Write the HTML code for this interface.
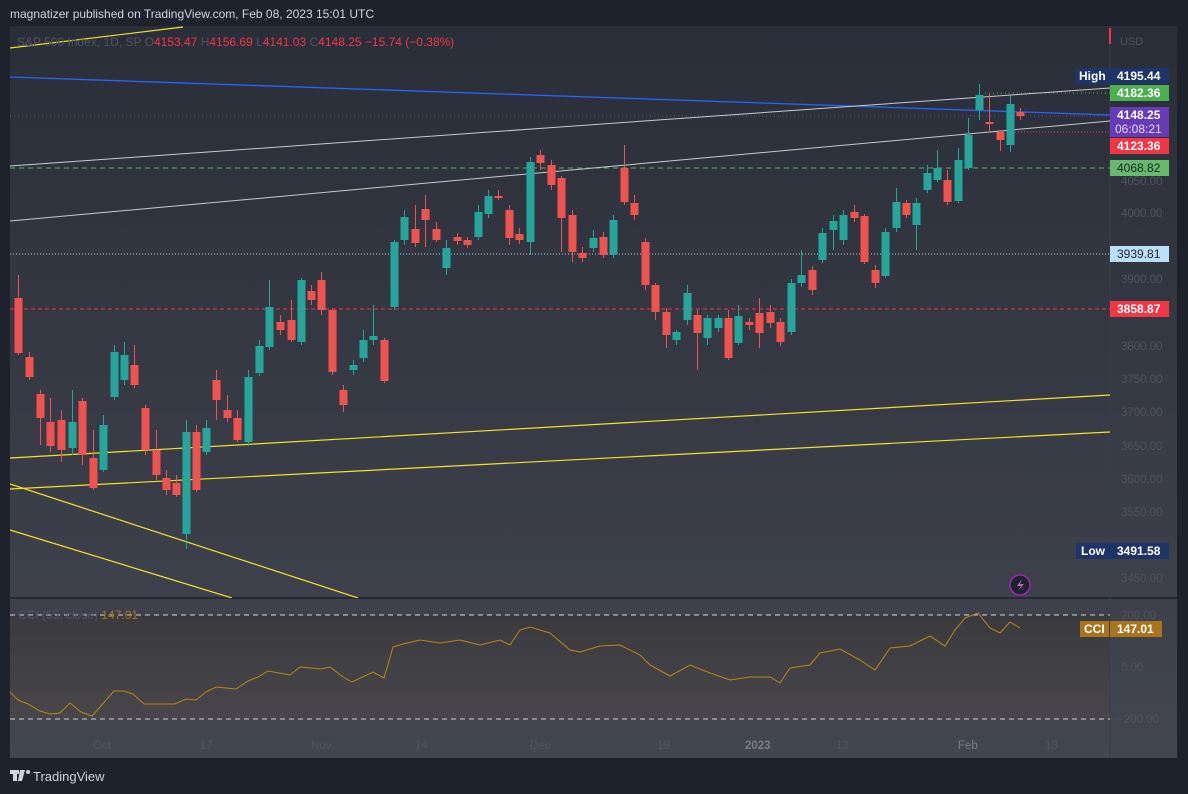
<!DOCTYPE html>
<html><head><meta charset="utf-8"><style>
*{margin:0;padding:0}
body{width:1188px;height:794px;background:#1e222d;overflow:hidden;font-family:"Liberation Sans",sans-serif;position:relative}
svg{position:absolute;left:0;top:0}
</style></head><body>
<svg id="s" width="1188" height="794" viewBox="0 0 1188 794" font-family="Liberation Sans, sans-serif">
<defs>
<linearGradient id="g" x1="0" y1="0" x2="0" y2="1"><stop offset="0" stop-color="#2a2e39"/><stop offset="1" stop-color="#434651"/></linearGradient>
<linearGradient id="c" x1="0" y1="0" x2="0" y2="1"><stop offset="0" stop-color="#3a3a3e"/><stop offset="1" stop-color="#48464a"/></linearGradient>
<clipPath id="cp"><rect x="10" y="26" width="1100" height="572"/></clipPath>
</defs>
<rect x="10" y="26" width="1167" height="732" fill="url(#g)"/>
<rect x="10" y="597" width="1167" height="2" fill="#262a33"/>
<rect x="10" y="615" width="1100" height="104" fill="url(#c)"/>
<line x1="1110" y1="26" x2="1110" y2="758" stroke="#3a3e48" stroke-width="1"/>
<text x="10" y="18" fill="#d1d4dc" font-size="12">magnatizer published on TradingView.com, Feb 08, 2023 15:01 UTC</text>
<g clip-path="url(#cp)" id="chart">
<line x1="10" y1="116" x2="1110" y2="116" stroke="#7e57c2" stroke-dasharray="1 3" opacity=".7"/>
<line x1="10" y1="254" x2="1110" y2="254" stroke="#b2c7e0" stroke-dasharray="1 2"/>
<line x1="10" y1="309" x2="1110" y2="309" stroke="#f23645" stroke-dasharray="4 3"/>
<line x1="10" y1="168" x2="1110" y2="168" stroke="#4caf50" stroke-dasharray="5 4"/>
<line x1="985" y1="93" x2="1110" y2="93" stroke="#4caf50" stroke-dasharray="1 3"/>
<line x1="985" y1="132" x2="1110" y2="132" stroke="#f23645" stroke-dasharray="1 2"/>
<line x1="10" y1="77" x2="1110" y2="115" stroke="#2962ff" stroke-width="1.3"/>
<line x1="10" y1="166" x2="1110" y2="88" stroke="#c8cad0" stroke-width="1"/>
<line x1="10" y1="221" x2="1110" y2="121" stroke="#c8cad0" stroke-width="1"/>
<line x1="10" y1="458" x2="1110" y2="395" stroke="#f5e12a" stroke-width="1.2"/>
<line x1="10" y1="489" x2="1110" y2="432" stroke="#f5e12a" stroke-width="1.2"/>
<line x1="10" y1="484" x2="358" y2="598" stroke="#f5e12a" stroke-width="1.2"/>
<line x1="10" y1="530" x2="232" y2="598" stroke="#f5e12a" stroke-width="1.2"/>
<line x1="10" y1="48" x2="183" y2="27" stroke="#f5e12a" stroke-width="1.2"/>
<g id="cdl"></g>
</g>
<text x="17" y="46" font-size="12" fill="#50535e">S&amp;P 500 Index, 1D, SP  O<tspan fill="#f23645">4153.47</tspan>  H<tspan fill="#f23645">4156.69</tspan>  L<tspan fill="#f23645">4141.03</tspan>  C<tspan fill="#f23645">4148.25</tspan>  <tspan fill="#f23645">−15.74 (−0.38%)</tspan></text>
<rect x="1109" y="28" width="2" height="16" fill="#f23645"/>
<text x="1120" y="45" font-size="11" fill="#50535e">USD</text>
<g font-size="11.5" fill="#50535e">
<text x="1121" y="185">4050.00</text><text x="1121" y="217">4000.00</text><text x="1121" y="283">3900.00</text>
<text x="1121" y="350">3800.00</text><text x="1121" y="383">3750.00</text><text x="1121" y="416">3700.00</text>
<text x="1121" y="450">3650.00</text><text x="1121" y="483">3600.00</text><text x="1121" y="516">3550.00</text>
<text x="1121" y="582">3450.00</text>
<text x="1121" y="619">200.00</text><text x="1121" y="671">0.00</text><text x="1117" y="723">−200.00</text>
<text x="93" y="749">Oct</text><text x="200" y="749">17</text><text x="311" y="749">Nov</text><text x="415" y="749">14</text>
<text x="530" y="749">Dec</text><text x="657" y="749">19</text><text x="1045" y="749">13</text><text x="836" y="749">13</text>
<text x="958" y="749" fill="#787b86">Feb</text><text x="745" y="749" font-weight="bold" fill="#787b86">2023</text>
</g>
<g font-size="12" font-weight="bold">
<rect x="1075" y="68" width="35" height="16" fill="#1e3466"/><text x="1079" y="80" fill="#fff">High</text>
<rect x="1110" y="68" width="59" height="16" fill="#1e3466"/><text x="1117" y="80" fill="#fff">4195.44</text>
<rect x="1110" y="85" width="59" height="16" fill="#4caf50"/><text x="1117" y="97" fill="#fff">4182.36</text>
<rect x="1110" y="107" width="59" height="30" fill="#673ab7"/><text x="1117" y="119" fill="#fff">4148.25</text><text x="1115" y="133" fill="#e0d8f0" font-weight="normal">06:08:21</text>
<rect x="1110" y="138" width="59" height="16" fill="#f23645"/><text x="1117" y="150" fill="#fff">4123.36</text>
<rect x="1110" y="160" width="59" height="16" fill="#66bb6a"/><text x="1117" y="172" fill="#1e222d" font-weight="normal">4068.82</text>
<rect x="1110" y="246" width="59" height="16" fill="#bbdefb"/><text x="1117" y="258" fill="#1e222d" font-weight="normal">3939.81</text>
<rect x="1110" y="301" width="59" height="16" fill="#f23645"/><text x="1117" y="313" fill="#fff">3858.87</text>
<rect x="1076" y="543" width="34" height="16" fill="#1e3466"/><text x="1081" y="555" fill="#fff">Low</text>
<rect x="1110" y="543" width="59" height="16" fill="#1e3466"/><text x="1117" y="555" fill="#fff">3491.58</text>
<rect x="1080" y="621" width="29" height="16" fill="#a8751c"/><text x="1084" y="633" fill="#fff">CCI</text>
<rect x="1110" y="621" width="52" height="16" fill="#a8751c"/><text x="1117" y="633" fill="#fff">147.01</text>
</g>
<circle cx="1020" cy="585" r="10" fill="#1e222d" stroke="#9c27b0" stroke-width="1.5"/>
<path d="M1022 579 L1017 586 L1021 586 L1018 591 L1024 584 L1020 584 Z" fill="#ba68c8"/>
<line x1="10" y1="615" x2="1110" y2="615" stroke="#d1d4dc" stroke-dasharray="5 4"/>
<line x1="10" y1="719" x2="1110" y2="719" stroke="#d1d4dc" stroke-dasharray="5 4"/>
<text x="18" y="619" font-size="12" fill="#50535e">CCI (55, close)  <tspan fill="#a8751c">147.01</tspan></text>
<polyline fill="none" stroke="#b8861a" stroke-width="1" points="10,692 18,700 28,704 40,711 50,714 60,713 70,703 81,712 92,716 114,691 124,691 133,694 144,704 175,704 186,699 196,700 206,692 216,687 236,689 248,681 258,677 268,671 290,675 300,667 321,669 330,667 343,677 352,682 373,672 384,678 393,647 403,644 420,640 440,643 460,640 480,645 500,640 510,645 520,630 530,627 550,633 570,650 580,652 600,646 620,645 640,655 650,665 670,676 690,665 710,673 730,680 750,677 770,677 780,683 790,668 810,665 820,653 840,649 860,660 875,670 890,648 910,646 930,636 945,646 955,630 965,618 978,613 990,628 1000,633 1010,622 1020,628"/>
<g fill="#d1d4dc"><rect x="10" y="770" width="9" height="4"/><rect x="13" y="770" width="4" height="11"/><path d="M20 770h5l-3 11h-4z"/><circle cx="28" cy="772" r="2"/></g>
<text x="33" y="781" font-size="13" fill="#d1d4dc">TradingView</text>
</svg>
<script>
var d=[[18,'R',298,353,275,355],[29,'R',357,377,352,380],[40,'R',394,418,390,445],[50,'R',422,446,398,452],[61,'R',420,450,410,462],[72,'G',422,448,390,455],[82,'R',401,455,398,465],[93,'R',458,488,430,490],[103,'G',425,470,415,472],[114,'G',352,397,345,400],[124,'G',355,380,342,385],[134,'R',365,385,345,388],[145,'R',408,450,405,455],[156,'R',450,475,430,480],[166,'R',478,490,470,495],[176,'R',483,495,475,497],[186,'G',432,534,420,549],[196,'R',432,490,425,492],[206,'G',428,452,420,455],[216,'R',380,400,370,420],[227,'R',410,418,395,422],[237,'R',418,440,410,442],[248,'G',377,442,370,446],[259,'G',346,373,340,376],[269,'G',307,347,280,350],[280,'R',322,330,315,335],[291,'R',320,340,300,342],[301,'G',280,342,278,345],[311,'R',291,300,285,305],[321,'R',280,310,272,315],[332,'R',310,372,308,375],[343,'R',390,405,385,412],[353,'G',365,370,360,375],[363,'G',340,358,330,362],[373,'G',336,340,305,345],[384,'R',340,381,338,383],[394,'G',242,307,240,310],[404,'G',217,240,210,245],[415,'R',229,243,205,247],[425,'R',209,220,195,247],[436,'R',229,240,222,242],[446,'G',248,268,240,275],[457,'R',237,241,233,245],[467,'R',240,245,237,248],[478,'G',212,237,205,240],[488,'G',196,214,190,218],[498,'R',196,198,190,200],[509,'R',210,238,205,245],[519,'R',234,240,228,244],[530,'G',162,242,157,255],[540,'R',155,163,150,170],[551,'R',165,185,160,190],[561,'R',178,218,176,252],[572,'R',215,252,210,262],[582,'R',253,258,247,262],[593,'G',238,248,230,252],[603,'R',237,255,232,258],[613,'G',220,255,215,258],[624,'R',168,202,145,205],[634,'R',203,215,195,220],[645,'R',242,285,238,290],[655,'R',285,312,283,320],[666,'R',312,335,308,348],[676,'G',332,340,330,345],[687,'G',293,320,285,325],[697,'R',315,333,310,370],[707,'G',318,338,315,345],[718,'G',318,328,315,332],[728,'R',318,358,310,360],[738,'G',316,343,305,345],[749,'R',322,325,318,330],[759,'R',313,333,298,348],[770,'R',312,323,305,328],[780,'R',322,342,318,346],[791,'G',283,332,279,335],[801,'G',275,283,250,287],[812,'R',270,290,266,295],[822,'G',233,260,228,263],[833,'G',221,230,215,250],[843,'G',215,240,210,245],[854,'R',212,218,205,222],[864,'R',216,262,214,264],[875,'R',270,283,265,288],[885,'G',232,276,228,278],[896,'G',202,228,188,232],[906,'R',203,215,200,218],[916,'G',203,225,198,250],[927,'G',173,190,165,193],[937,'G',168,180,150,182],[947,'R',180,202,170,205],[958,'G',160,201,148,203],[968,'G',135,168,118,170],[979,'G',95,110,84,120],[989,'R',122,124,93,132],[1000,'R',132,140,130,151],[1010,'G',104,145,96,152],[1020,'R',112,116,108,120]];
var h='';d.forEach(function(c){var col=c[1]=='G'?'#26a69a':'#ef5350';h+='<line x1="'+(c[0]+.5)+'" y1="'+c[4]+'" x2="'+(c[0]+.5)+'" y2="'+c[5]+'" stroke="'+col+'"/><rect x="'+(c[0]-3.5)+'" y="'+c[2]+'" width="8" height="'+Math.max(1,c[3]-c[2])+'" fill="'+col+'"/>';});
document.getElementById('cdl').innerHTML=h;
</script>
</body></html>
